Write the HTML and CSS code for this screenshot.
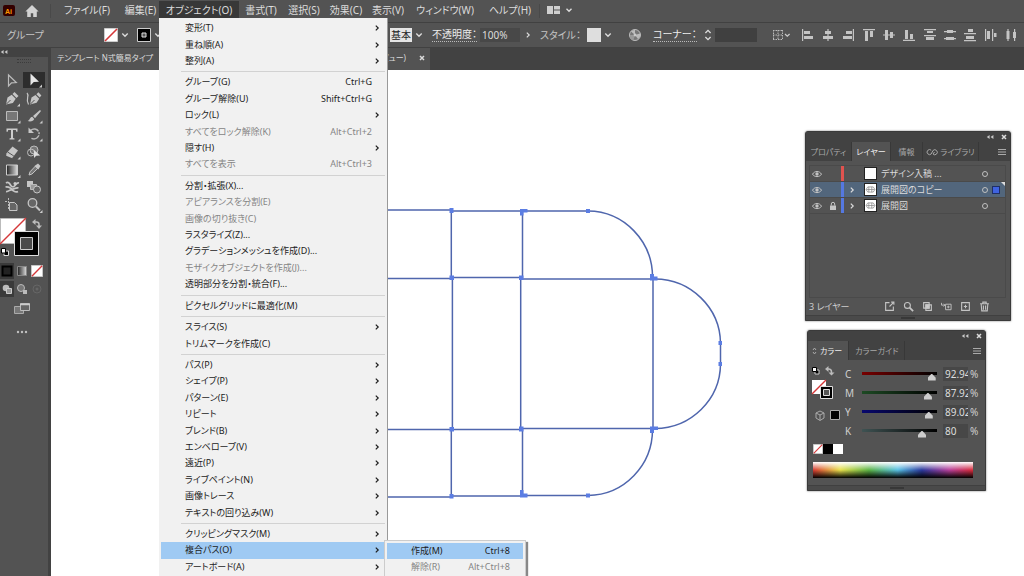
FILE: index.html
```html
<!DOCTYPE html>
<html lang="ja">
<head>
<meta charset="utf-8">
<title>テンプレート N式簡易タイプ</title>
<link rel="stylesheet" href="styles.css">
</head>
<body>
<svg class="defs" aria-hidden="true">
  <symbol id="chev-down" viewBox="0 0 8 8"><path d="M1.3 2.6 4 5.2 6.7 2.6" fill="none" stroke="currentColor" stroke-width="1.4"/></symbol>
  <symbol id="chev-right" viewBox="0 0 8 8"><path d="M2.8 1.6 5.2 4 2.8 6.4" fill="none" stroke="currentColor" stroke-width="1.2"/></symbol>
  <symbol id="none" viewBox="0 0 14 14"><path d="M.5.5h13v13H.5z" fill="#fff" stroke="#ccc"/><path d="M1 13 13 1" stroke="#d5383a" stroke-width="1.6"/></symbol>
  <symbol id="eye" viewBox="0 0 10 8"><path d="M.5 4.2C2.5.6 7.5.6 9.5 4.2 7.5 7.4 2.5 7.4.5 4.2z" fill="none" stroke="#c4c4c4"/><circle cx="5" cy="4" r="1.7" fill="#c4c4c4"/></symbol>
  <symbol id="close" viewBox="0 0 8 8"><path d="m2 2 4 4M6 2 2 6" stroke="currentColor" stroke-width="1.5"/></symbol>
  <symbol id="collapse" viewBox="0 0 8 8"><path d="M3.6 2v4L.8 4zM7.4 2v4L4.6 4z" fill="#c8c8c8"/></symbol>
  <symbol id="burger" viewBox="0 0 8 8"><path d="M0 1.5h8M0 4h8M0 6.5h8" stroke="#aaa"/></symbol>
  <symbol id="net" viewBox="0 0 12 12"><path d="M0 0h12v12H0z" fill="#fff"/><path d="M1.5 6h9M4.2 3v6M7.4 3v6M3 3.2h6L10.8 6 9 8.8H3L1.2 6z" fill="none" stroke="#888" stroke-width=".8"/></symbol>
</svg>
<div class="app">
  <header class="menubar">
    <svg class="brand" viewBox="0 0 52 22" aria-label="Ai" role="img">
      <rect x="3" y="5" width="12" height="11" rx="2" fill="#330000"/>
      <text x="5" y="13.5" class="brand-text">Ai</text>
      <path d="M32 5 25.4 11.6h1.8V17h3.6v-3.8h2.4V17h3.6v-5.4h1.8z" fill="#d2d2d2"/>
      <path d="M50.5 4v14" stroke="#494949"/>
    </svg>
    <nav class="menus">
      <button>ファイル(F)</button><button>編集(E)</button><button class="open">オブジェクト(O)</button><button>書式(T)</button><button>選択(S)</button><button>効果(C)</button><button>表示(V)</button><button>ウィンドウ(W)</button><button>ヘルプ(H)</button>
    </nav>
    <button class="arrange" aria-label="ドキュメントレイアウト"><svg viewBox="0 0 36 22"><path d="M.5 4v14" stroke="#494949"/><path d="M8 6h6v8H8zM15 6h6v3.5h-6zM15 10.500h6V14h-6z" fill="#cfcfcf"/><path d="m27.500 8.800 2.500 2.400 2.500-2.400" fill="none" stroke="#ddd" stroke-width="1.400"/></svg></button>
  </header>

  <section class="controlbar">
    <span class="selection-kind">グループ</span>
    <button class="swatch-btn" aria-label="塗り"><svg class="sw"><use href="#none"/></svg><svg class="chev"><use href="#chev-down"/></svg></button>
    <button class="swatch-btn" aria-label="線"><svg class="sw" viewBox="0 0 14 14"><path d="M.5.5h13v13H.5z" fill="#000" stroke="#ccc"/><path d="M5 5h4v4H5z" fill="#555" stroke="#ddd"/></svg><svg class="chev"><use href="#chev-down"/></svg></button>
    <label class="brush"><select aria-label="ブラシ定義"><option>基本</option></select><svg class="chev"><use href="#chev-down"/></svg></label>
    <label class="link" for="opacity">不透明度：</label>
    <span class="opacity"><input id="opacity" value="100%"><svg class="chev"><use href="#chev-right"/></svg></span>
    <span class="style-label">スタイル：</span>
    <button class="swatch-btn" aria-label="グラフィックスタイル"><svg class="sw" viewBox="0 0 14 14"><path d="M0 0h14v14H0z" fill="#dedede"/></svg><svg class="chev"><use href="#chev-down"/></svg></button>
    <button class="globe" aria-label="オブジェクトを再配色"><svg viewBox="0 0 14 14"><circle cx="7" cy="7" r="5.500" fill="#777" stroke="#bdbdbd"/><path d="M7 7 3 3.500A5 5 0 0 1 7 2zM7 7l5-1.500A5 5 0 0 1 10 11z" fill="#bbb"/><path d="m7 7-1.500 5A5 5 0 0 1 2 7z" fill="#999"/><circle cx="7" cy="7" r="1.400" fill="#c8c8c8"/></svg></button>
    <label class="link" for="corner">コーナー：</label>
    <span class="corner"><svg viewBox="0 0 10 14"><path d="M2.400 5 5 2.400 7.600 5M2.400 9 5 11.600 7.600 9" fill="none" stroke="#ddd" stroke-width="1.300"/></svg><input id="corner" value=""></span>
    <button class="grid-btn" aria-label="整列"><svg viewBox="0 0 22 14"><path d="M3 2.500h10M3 7h10M3 11.500h10M3.500 2v10M8 2v10M12.500 2v10" stroke="#bbb" stroke-dasharray="1.500 1" fill="none"/><path d="m15 6 2.300 2.200L19.600 6" fill="none" stroke="#ccc" stroke-width="1.200"/></svg></button>
    <span class="aligns">
      <span class="align-group">
        <button aria-label="水平方向左に整列"><svg viewBox="0 0 14 14"><path d="M1 1h1.200v12H1zM3 3h6v3H3zM3 8h9v3H3z"/></svg></button>
        <button aria-label="水平方向中央に整列"><svg viewBox="0 0 14 14"><path d="M6.400 1h1.200v12H6.400zM4 3h6v3H4zM2 8h10v3H2z"/></svg></button>
        <button aria-label="水平方向右に整列"><svg viewBox="0 0 14 14"><path d="M11.800 1H13v12h-1.200zM5 3h6v3H5zM2 8h9v3H2z"/></svg></button>
      </span>
      <span class="align-group">
        <button aria-label="垂直方向上に整列"><svg viewBox="0 0 14 14"><path d="M1 1h12v1.200H1zM3 3h3v10H3zM8 3h3v6H8z"/></svg></button>
        <button aria-label="垂直方向中央に整列"><svg viewBox="0 0 14 14"><path d="M1 6.400h12v1.200H1zM3 2h3v10H3zM8 4h3v6H8z"/></svg></button>
        <button aria-label="垂直方向下に整列"><svg viewBox="0 0 14 14"><path d="M1 11.800h12V13H1zM3 2h3v9H3zM8 6h3v5H8z"/></svg></button>
      </span>
      <span class="align-group">
        <button aria-label="上端分布"><svg viewBox="0 0 14 14"><path d="M1 1h12v1.200H1zM4 3h6v2H4zM1 7h12v1.200H1zM3 9h8v3H3z"/></svg></button>
        <button aria-label="垂直中央分布"><svg viewBox="0 0 14 14"><path d="M1 3h12v1.200H1zM4 2h6v3H4zM1 10h12v1.200H1zM3 9h8v3H3z"/></svg></button>
        <button aria-label="下端分布"><svg viewBox="0 0 14 14"><path d="M1 5h12v1.200H1zM5 1h5v3H5zM1 12h12v1.200H1zM3 8h8v3H3z"/></svg></button>
      </span>
      <span class="align-group">
        <button aria-label="左端分布"><svg viewBox="0 0 14 14"><path d="M1 1h1.200v12H1zM3 3h3v8H3zM8 1h1.200v12H8zM10 5h2.500v4H10z"/></svg></button>
        <button aria-label="水平中央分布"><svg viewBox="0 0 14 14"><path d="M3.400 1h1.200v12H3.400zM2.500 3h3v8h-3zM10 1h1.200v12H10zM9 4h3v6H9z"/></svg></button>
      </span>
    </span>
  </section>

  <main class="workspace">
    <aside class="toolbar">
      <div class="tool-head"><svg viewBox="0 0 8 8"><use href="#collapse"/></svg></div>
      <div class="tool-grip"></div>
      <div class="tools">
        <button aria-label="選択"><svg viewBox="0 0 18 18"><path d="M5.500 3v11l3-3.200 4.800-.3z" fill="none" stroke="#bbb" stroke-width="1.200"/></svg></button>
        <button class="on" aria-label="ダイレクト選択"><svg viewBox="0 0 18 18"><path d="M5.500 2.500v12l3.300-3.400 5.200-.3z" fill="#e6e6e6"/><path d="M17 13.500v3h-3z" fill="#ccc"/></svg></button>
        <button aria-label="ペン"><svg viewBox="0 0 18 18"><path d="m3 14.500 1.500-7 4.200-2.700 4 4-2.800 4.100zM9.500 4l2-2 4 4-2 2z" fill="#c6c6c6"/><path d="m3.500 14 4-4" stroke="#535353"/><path d="M17 13.500v3h-3z" fill="#ccc"/></svg></button>
        <button aria-label="曲線"><svg viewBox="0 0 18 18"><path d="m5 14.500 1.500-7 4-2.500 3.700 3.700-2.600 4zM11.400 4.200l2-2 3 3.200-1.800 2z" fill="#c6c6c6"/><path d="m5.500 14 4-4" stroke="#535353"/><path d="M2 3c3 3-2 6 1.500 11.500" fill="none" stroke="#c6c6c6" stroke-width="1.200"/></svg></button>
        <button aria-label="長方形"><svg viewBox="0 0 18 18"><path d="M3.500 4.500h11v9h-11z" fill="#777" stroke="#bcbcbc"/><path d="M17.500 13.500v3h-3z" fill="#ccc"/></svg></button>
        <button aria-label="ブラシ"><svg viewBox="0 0 18 18"><path d="M15 3 8 9l2 2.200L16 4zM7.300 9.800c-2.300.2-2.300 3.200-4.600 4.200 2.800 1 6 0 6.500-2z" fill="#c6c6c6"/><path d="M17.500 13.500v3h-3z" fill="#ccc"/></svg></button>
        <button aria-label="文字"><svg viewBox="0 0 18 18"><path d="M3.500 3.500h11v3.200h-1.200l-.5-1.700H10v8l1.500.4v1h-5v-1L8 13V5H5.200l-.5 1.700H3.500z" fill="#ccc"/><path d="M17.500 13.500v3h-3z" fill="#ccc"/></svg></button>
        <button aria-label="回転"><svg viewBox="0 0 18 18"><path d="M5.500 5.500C10 1.500 16 6 13.500 11c-1.700 3-5 3.500-8 2" fill="none" stroke="#b8b8b8" stroke-width="1.500" stroke-dasharray="9 1 2 1"/><path d="M3.500 2.500V8H9z" fill="#c6c6c6"/><path d="M17.500 13.500v3h-3z" fill="#ccc"/></svg></button>
        <button aria-label="消しゴム"><svg viewBox="0 0 18 18"><path d="m9.500 3.500 5.500 4-5 6.500-6.500-3.800z" fill="#c6c6c6"/><path d="m4.600 9 6.200 4" stroke="#535353"/><path d="m3.500 10-.3 2.800 6 2.500 1-2" fill="#c6c6c6"/><path d="M17.500 13.500v3h-3z" fill="#ccc"/></svg></button>
        <button aria-label="シェイプ形成"><svg viewBox="0 0 18 18"><circle cx="9" cy="7" r="4" fill="#777" stroke="#bbb"/><circle cx="6" cy="9.500" r="3.500" fill="none" stroke="#bbb"/><path d="M9 7v8l2.200-2.200 4-.3z" fill="#ddd"/></svg></button>
        <button aria-label="グラデーション"><svg viewBox="0 0 18 18"><defs><linearGradient id="g1"><stop stop-color="#222"/><stop offset="1" stop-color="#ddd"/></linearGradient></defs><path d="M3.500 4h11v10h-11z" fill="url(#g1)" stroke="#ccc"/><path d="M17.500 14v3h-3z" fill="#ccc"/></svg></button>
        <button aria-label="スポイト"><svg viewBox="0 0 18 18"><path d="m4 14 1-3.200L10.500 5l2.300 2.300L7 13z" fill="#777" stroke="#c6c6c6"/><path d="m9.500 5 3.800 3.500 2.200-3.500-2.500-2.500z" fill="#c6c6c6"/></svg></button>
        <button aria-label="パペットワープ"><svg viewBox="0 0 18 18"><path d="M3 5c2-1.500 3.500 0 4.500 2s3 2.500 4.500.5 2-3 4-2.500M2.500 9c3-.5 4.500 1 6.500 2s3.500-2 6.500-1M3 13.500c3 .5 3.500-2.500 6-1.500s3 3 6 1.500" fill="none" stroke="#c6c6c6" stroke-width="1.700"/><circle cx="12" cy="5.500" r="1.500" fill="#ccc"/></svg></button>
        <button aria-label="ブレンド"><svg viewBox="0 0 18 18"><path d="M2 3h6v6H2z" fill="#c6c6c6"/><path d="M5.500 6.500h6v5h-6z" fill="#999" stroke="#bbb"/><circle cx="12" cy="11.500" r="3.500" fill="#666" stroke="#c6c6c6"/></svg></button>
        <button aria-label="アートボード"><svg viewBox="0 0 18 18"><path d="M5.500 2v12M2 5.500h3.500" stroke="#bbb" stroke-dasharray="2 1"/><path d="M6.500 6.500h5l2.500 2.500v5.500H6.500z" fill="#666" stroke="#c6c6c6"/></svg></button>
        <button aria-label="ズーム"><svg viewBox="0 0 18 18"><circle cx="7.500" cy="7" r="4.300" fill="#666" stroke="#c6c6c6" stroke-width="1.300"/><path d="m11 10.500 4 4" stroke="#c6c6c6" stroke-width="2"/><path d="M17.500 14v3h-3z" fill="#ccc"/></svg></button>
      </div>
      <svg class="fill-stroke" viewBox="0 0 48 44" aria-label="塗りと線" role="img">
        <path d="M.5 1.500h25v25H.5z" fill="#fff" stroke="#bbb"/><path d="m0 27 26-26" stroke="#d5383a" stroke-width="1.500"/>
        <path d="M14.500 14.500h24v24h-24z" fill="#000" stroke="#ddd"/><path d="M20.500 20.500h12v12h-12z" fill="#4a4a4a" stroke="#ccc"/>
        <path d="M34 5h2.500a2.500 2.500 0 0 1 2.500 2.500V9" fill="none" stroke="#bbb" stroke-width="1.500"/><path d="M35.500 2v6L32 5zM36 8.500h6l-3 3.500z" fill="#bbb"/>
        <path d="M4 34h4.500v4.500H4z" fill="#000" stroke="#ddd"/><path d="M1.500 31.500h4V36h-4z" fill="#fff" stroke="#000"/>
      </svg>
      <div class="modes">
        <button class="on" aria-label="カラー"><svg viewBox="0 0 12 12"><path d="M1.500 1.500h9v9h-9z" fill="#222" stroke="#000" stroke-width="2"/></svg></button>
        <button aria-label="グラデーション塗り"><svg viewBox="0 0 12 12"><path d="M1.500 1.500h9v9h-9z" fill="url(#g1)" stroke="#888"/></svg></button>
        <button aria-label="なし"><svg viewBox="0 0 12 12"><use href="#none"/></svg></button>
        <button class="on" aria-label="標準描画"><svg viewBox="0 0 12 12"><circle cx="5" cy="5" r="3.300" fill="#bbb"/><path d="M5.500 5.500h5v5h-5z" fill="#999" stroke="#ccc"/></svg></button>
        <button aria-label="背面描画"><svg viewBox="0 0 12 12"><circle cx="5" cy="5" r="3.500" fill="#777" stroke="#bbb"/><path d="M7 7h4v4H7z" fill="#bbb"/></svg></button>
        <button aria-label="内側描画"><svg viewBox="0 0 12 12"><circle cx="6" cy="6" r="4" fill="none" stroke="#666"/><circle cx="6" cy="6" r="1.500" fill="#666"/></svg></button>
      </div>
      <button class="screen-mode" aria-label="スクリーンモード"><svg viewBox="0 0 18 14"><path d="M1.500 4.500h9v7h-9z" fill="#777" stroke="#aaa"/><path d="M7.500 1.500h9v7h-9z" fill="#666" stroke="#bbb"/><path d="M7 2.500h10" stroke="#ccc" stroke-width="1.500"/></svg></button>
      <button class="more" aria-label="ツールバーを編集"><svg viewBox="0 0 12 4"><circle cx="2" cy="2" r="1.200"/><circle cx="6" cy="2" r="1.200"/><circle cx="10" cy="2" r="1.200"/></svg></button>
    </aside>

    <section class="document">
      <div class="tabs"><div class="doc-tab"><span>テンプレート N式簡易タイプ</span><span class="tab-end">ビュー)</span><button aria-label="閉じる"><svg><use href="#close"/></svg></button></div></div>
      <div class="canvas">
        <svg class="artwork" viewBox="380 200 350 305">
          <g fill="none" stroke="#4f66ad" stroke-width="1.500">
            <path d="M380 210h71M451 211H588A65 66 0 0 1 652.500 278M380 278.500h71M451 277.500h71M522 279H655A66 65 0 0 1 720.500 343V364A66 65 0 0 1 655 428.500H522M380 429.500H521M380 497h71M451 496h71M522 495.500H588A65 66 0 0 0 652.500 429"/>
            <path d="M451.300 210v68M522.500 211v67M452.400 278v151M520.700 278v151M653 278v151M451.300 429v68M522.500 429v67"/>
          </g>
          <path fill="#5b7de3" d="M449.500 208h4v5h-4zM520 209h3.500v6.500H520zM523.500 209h4v3.500h-4zM586 209h4v4h-4zM449.500 275.500h4.500v4.500h-4.500zM519 275.500h4.500v4.500H519zM650 274h4v2.500h3.500v4H650zM718.500 341h3.500v4h-3.500zM718.500 362h3.500v4h-3.500zM449.500 427h4.500v4.500h-4.500zM519 426.500h4.500v5H519zM650 426.500h8v3.500h-4v3h-4zM449.500 494h4v4.500h-4zM520 490h3.500v3.500h4v4H520zM586 493.500h4v4h-4z"/>
        </svg>
      </div>
    </section>
  </main>

  <ul class="menu">
    <li><button>変形(T)<svg><use href="#chev-right"/></svg></button></li>
    <li><button>重ね順(A)<svg><use href="#chev-right"/></svg></button></li>
    <li><button>整列(A)<svg><use href="#chev-right"/></svg></button></li>
    <li class="sep"></li>
    <li><button>グループ(G)<kbd>Ctrl+G</kbd></button></li>
    <li><button>グループ解除(U)<kbd>Shift+Ctrl+G</kbd></button></li>
    <li><button>ロック(L)<svg><use href="#chev-right"/></svg></button></li>
    <li><button disabled>すべてをロック解除(K)<kbd>Alt+Ctrl+2</kbd></button></li>
    <li><button>隠す(H)<svg><use href="#chev-right"/></svg></button></li>
    <li><button disabled>すべてを表示<kbd>Alt+Ctrl+3</kbd></button></li>
    <li class="sep"></li>
    <li><button>分割・拡張(X)...</button></li>
    <li><button disabled>アピアランスを分割(E)</button></li>
    <li><button disabled>画像の切り抜き(C)</button></li>
    <li><button>ラスタライズ(Z)...</button></li>
    <li><button>グラデーションメッシュを作成(D)...</button></li>
    <li><button disabled>モザイクオブジェクトを作成(J)...</button></li>
    <li><button>透明部分を分割・統合(F)...</button></li>
    <li class="sep"></li>
    <li><button>ピクセルグリッドに最適化(M)</button></li>
    <li class="sep"></li>
    <li><button>スライス(S)<svg><use href="#chev-right"/></svg></button></li>
    <li><button>トリムマークを作成(C)</button></li>
    <li class="sep"></li>
    <li><button>パス(P)<svg><use href="#chev-right"/></svg></button></li>
    <li><button>シェイプ(P)<svg><use href="#chev-right"/></svg></button></li>
    <li><button>パターン(E)<svg><use href="#chev-right"/></svg></button></li>
    <li><button>リピート<svg><use href="#chev-right"/></svg></button></li>
    <li><button>ブレンド(B)<svg><use href="#chev-right"/></svg></button></li>
    <li><button>エンベロープ(V)<svg><use href="#chev-right"/></svg></button></li>
    <li><button>遠近(P)<svg><use href="#chev-right"/></svg></button></li>
    <li><button>ライブペイント(N)<svg><use href="#chev-right"/></svg></button></li>
    <li><button>画像トレース<svg><use href="#chev-right"/></svg></button></li>
    <li><button>テキストの回り込み(W)<svg><use href="#chev-right"/></svg></button></li>
    <li class="sep"></li>
    <li><button>クリッピングマスク(M)<svg><use href="#chev-right"/></svg></button></li>
    <li><button class="hot">複合パス(O)<svg><use href="#chev-right"/></svg></button>
      <ul class="submenu">
        <li><button class="hot">作成(M)<kbd>Ctrl+8</kbd></button></li>
        <li><button disabled>解除(R)<kbd>Alt+Ctrl+8</kbd></button></li>
      </ul>
    </li>
    <li><button>アートボード(A)<svg><use href="#chev-right"/></svg></button></li>
  </ul>

  <section class="panel layers">
    <div class="panel-top"><svg><use href="#collapse"/></svg><svg><use href="#close"/></svg></div>
    <div class="panel-tabs">
      <button>プロパティ</button><button class="current">レイヤー</button><button>情報</button><button class="cc"><svg viewBox="0 0 12 8"><path d="M5.200 2.200A2.500 2.500 0 1 0 5.200 6L7 2.500A2.500 2.500 0 1 1 7 6M8.500 4 7 6" fill="none" stroke="currentColor"/></svg>ライブラリ</button>
      <svg class="burger"><use href="#burger"/></svg>
    </div>
    <div class="layer-list">
      <div class="layer"><svg class="eye"><use href="#eye"/></svg><i></i><b class="red"></b><i></i><span class="thumb"></span><span class="name">デザイン入稿 ...</span><span class="target"></span></div>
      <div class="layer picked"><svg class="eye"><use href="#eye"/></svg><i></i><b></b><svg class="tw"><use href="#chev-right"/></svg><svg class="thumb"><use href="#net"/></svg><span class="name">展開図のコピー</span><span class="target"></span><span class="chosen"></span></div>
      <div class="layer"><svg class="eye"><use href="#eye"/></svg><svg class="lock" viewBox="0 0 8 10"><path d="M1 4.500h6V9H1z" fill="#c4c4c4"/><path d="M2.300 4.500V3a1.700 1.700 0 0 1 3.400 0v1.500" fill="none" stroke="#c4c4c4"/></svg><b></b><svg class="tw"><use href="#chev-right"/></svg><svg class="thumb"><use href="#net"/></svg><span class="name">展開図</span><span class="target"></span></div>
    </div>
    <div class="panel-foot">
      <span>3 レイヤー</span>
      <button aria-label="書き出し"><svg viewBox="0 0 10 10"><path d="M5 1.500H1.500v7h7V5M5 5l4-4M6.500 1H9v2.500"/></svg></button>
      <button aria-label="検索"><svg viewBox="0 0 10 10"><circle cx="4" cy="4" r="2.700"/><path d="m6 6 3.200 3.200" stroke-width="1.600"/></svg></button>
      <button aria-label="クリッピングマスク"><svg viewBox="0 0 10 10"><path d="M1.500 1.500h5v5h-5zM3.500 3.500h5v5h-5z"/><path d="M3.500 3.500h3v3h-3z" fill="#ccc"/></svg></button>
      <button aria-label="サブレイヤー"><svg viewBox="0 0 12 10"><path d="M5 2.500h6v6H5zM8 4v3M6.500 5.500h3M.5 1v2.500H4M2.800 2 4.200 3.500 2.800 5"/></svg></button>
      <button aria-label="新規レイヤー"><svg viewBox="0 0 10 10"><path d="M1.500 1.500h7v7h-7zM5 3.500v3M3.500 5h3"/></svg></button>
      <button aria-label="削除"><svg viewBox="0 0 10 10"><path d="M1 2.500h8M3.500 2V1h3v1M2 3l.5 6h5L8 3M4 4v4M6 4v4"/></svg></button>
    </div>
    <div class="panel-grip"></div>
  </section>

  <section class="panel color">
    <div class="panel-top"><svg><use href="#collapse"/></svg><svg><use href="#close"/></svg></div>
    <div class="panel-tabs">
      <button class="current"><svg viewBox="0 0 5 8"><path d="m1 3 1.500-2L4 3M1 5l1.500 2L4 5" fill="none" stroke="#aaa"/></svg>カラー</button><button>カラーガイド</button>
      <svg class="burger"><use href="#burger"/></svg>
    </div>
    <div class="color-body">
      <svg class="color-proxy" viewBox="0 0 36 66" aria-label="塗りと線" role="img">
        <path d="M7 6h4v4H7z" fill="#000" stroke="#ccc"/><path d="M4.500 3.500h4v4h-4z" fill="#fff" stroke="#000"/>
        <path d="M19 5h1.500a3 3 0 0 1 3 3v1" fill="none" stroke="#bbb" stroke-width="1.500"/><path d="M20.500 2v6L17 5zM20.500 8.500h6l-3 3z" fill="#bbb"/>
        <path d="M4 16h14v14H4z" fill="#fff"/><path d="m4 30 14-14" stroke="#d5383a" stroke-width="1.400"/>
        <path d="M12.500 22.500h12v12h-12z" fill="#000" stroke="#ddd"/><path d="M15.500 25.500h6v6h-6z" fill="#555" stroke="#ddd"/>
        <path d="m12 47 4 2v5l-4 2.500L8 54v-5zM8 49l4 2 4-2M12 51v5" fill="none" stroke="#aaa"/>
        <path d="M22.500 46.500h9v9h-9z" fill="#000" stroke="#aaa"/>
      </svg>
      <div class="channels">
        <label for="c">C</label><input class="c" type="range" min="0" max="100" step="any" value="92.94" aria-label="C"><input id="c" value="92.94"><span>%</span>
        <label for="m">M</label><input class="m" type="range" min="0" max="100" step="any" value="87.92" aria-label="M"><input id="m" value="87.92"><span>%</span>
        <label for="y">Y</label><input class="y" type="range" min="0" max="100" step="any" value="89.02" aria-label="Y"><input id="y" value="89.02"><span>%</span>
        <label for="k">K</label><input class="k" type="range" min="0" max="100" step="any" value="80" aria-label="K"><input id="k" value="80"><span>%</span>
      </div>
    </div>
    <div class="quick"><svg viewBox="0 0 14 14"><use href="#none"/></svg><span class="black"></span><span class="white"></span></div>
    <div class="spectrum"></div>
    <div class="panel-grip"></div>
  </section>
</div>
</body>
</html>
```
FILE: styles.css
```css
* { box-sizing: border-box; }
body {
  margin: 0;
  font: 10px/14px "Noto Sans", "Noto Sans CJK JP", sans-serif;
  font-feature-settings: "palt";
  color: #dcdcdc;
}
button, input, select {
  margin: 0;
  padding: 0;
  border: 0;
  border-radius: 0;
  background: none;
  color: inherit;
  font: inherit;
  font-feature-settings: inherit;
  appearance: none;
}
button { display: flex; align-items: center; justify-content: center; white-space: nowrap; }
svg { display: block; flex: none; }
ul { list-style: none; margin: 0; padding: 0; }
.defs { position: absolute; width: 0; height: 0; }
.app {
  position: relative;
  display: flex;
  flex-direction: column;
  height: 100vh;
  overflow: hidden;
  background: #535353;
}

/* Menu bar */
.menubar { display: flex; flex: none; height: 22px; }
.brand { width: 52px; height: 22px; }
.brand-text { font: bold 7px "Liberation Sans", sans-serif; fill: #ff9a00; }
.menus {
  display: grid;
  grid-template-columns: 70px 37px 80px 44px 42px 42px 42px 72px 58px;
  height: 18px;
  padding-top: 1px;
}
.menus .open { background: #383838; }
.arrange { width: 36px; height: 22px; }
.arrange svg { width: 36px; height: 22px; }

/* Control bar */
.controlbar {
  display: grid;
  grid-template-columns: 104px 33px 253px 42px 48px 60px 47px 41px 25px 50px 64px 31px 1fr;
  align-items: center;
  flex: none;
  height: 26px;
  border-top: 1px solid #414141;
  border-bottom: 1px solid #414141;
  white-space: nowrap;
}
.selection-kind { padding-left: 7px; color: #c4c4c4; }
.swatch-btn { justify-content: flex-start; gap: 3px; }
.sw { width: 14px; height: 14px; }
.chev { width: 8px; height: 8px; }
.brush { display: flex; align-items: center; gap: 3px; }
.brush select { width: 22px; height: 14px; padding-left: 1px; background: #e4e4e4; color: #222; }
.link { justify-self: start; border-bottom: 1px dotted #bbb; line-height: 13px; color: #eee; }
.opacity, .corner { display: flex; align-items: center; gap: 4px; }
.opacity input { width: 40px; height: 14px; padding-left: 2px; background: #484848; }
.style-label { color: #c4c4c4; }
.globe { width: 14px; height: 14px; }
.globe svg { width: 14px; height: 14px; }
.corner { gap: 2px; }
.corner svg { width: 10px; height: 14px; }
.corner input { width: 42px; height: 14px; background: #404040; }
.grid-btn { width: 28px; }
.grid-btn svg { width: 22px; height: 14px; }
.aligns { display: flex; gap: 1px; overflow: hidden; }
.align-group { display: flex; }
.align-group button { width: 20px; height: 16px; }
.align-group svg { width: 14px; height: 14px; fill: #c4c4c4; }

/* Work area */
.workspace { display: flex; flex: 1; min-height: 0; }
.toolbar {
  flex: none;
  width: 51px;
  border-right: 3px solid #424242;
}
.tool-head { height: 9px; background: #424242; }
.tool-head svg { width: 8px; height: 8px; }
.tool-grip { width: 14px; height: 4px; margin: 2px auto; border: dotted #3c3c3c; border-width: 1px 0; }
.tools { display: grid; grid-template: repeat(8, 1fr) / 23px 22px; height: 143px; padding-top: 1px; margin-top: 8px; }
.tools button { min-height: 0; }
.tools .on { height: 16px; background: #2d2d2d; }
.tools svg { width: 18px; height: 18px; }
.fill-stroke { width: 48px; height: 44px; margin-top: 3px; }
.modes { display: grid; grid-template: 18px 18px / repeat(3, 15px); margin-top: 2px; }
.modes button { width: 14px; height: 16px; }
.modes .on { background: #3a3a3a; }
.modes svg { width: 12px; height: 12px; }
.screen-mode { width: 18px; margin: 3px auto 0 13px; }
.screen-mode svg { width: 18px; height: 14px; }
.more { width: 12px; margin: 14px auto 0 16px; }
.more svg { width: 12px; height: 4px; fill: #c0c0c0; }
.document { display: flex; flex-direction: column; flex: 1; min-width: 0; }
.tabs { flex: none; height: 22px; background: #424242; }
.doc-tab { display: flex; align-items: center; width: 379px; height: 22px; padding: 0 4px 2px 6px; background: #535353; font-size: 8px; }
.tab-end { margin-left: auto; }
.doc-tab button { width: 8px; margin-left: 12px; }
.doc-tab svg { width: 8px; height: 8px; }
.canvas { position: relative; flex: 1; background: #fff; }
.artwork { position: absolute; left: 329px; top: 130px; width: 350px; height: 305px; }

/* Drop-down menu */
.menu {
  position: absolute;
  left: 159px;
  top: 18px;
  bottom: 0;
  display: flex;
  flex-direction: column;
  width: 229px;
  padding: 2px 2px 1px;
  border-right: 1px solid #999;
  background: #f1f1f1;
  color: #1c1c1c;
  font-size: 9px;
}
.menu li { position: relative; display: flex; flex: 1; min-height: 0; }
.menu button { flex: 1; justify-content: flex-start; padding: 0 4px 0 24px; line-height: 12px; }
.menu button:disabled { color: #858585; }
.menu .hot { background: #9fcaf3; }
.menu button svg { width: 8px; height: 8px; margin-left: auto; }
.menu kbd { margin: 0 9px 0 auto; font: inherit; }
.menu .sep { flex: none; height: 5px; margin: 0 0 0 20px; align-items: center; }
.menu .sep::before { content: ""; flex: 1; height: 1px; background: #d2d2d2; }
.menu .submenu {
  position: absolute;
  left: 223px;
  top: -2px;
  display: grid;
  grid-auto-rows: 16px;
  width: 142px;
  padding: 2px;
  background: #f1f1f1;
  border: 1px solid #ccc;
  box-shadow: 2px 2px 1px #888;
}

/* Floating panels */
.panel {
  position: absolute;
  display: flex;
  flex-direction: column;
  border: 1px solid #3a3a3a;
  border-radius: 3px 3px 0 0;
  background: #535353;
  box-shadow: 0 0 2px #666;
}
.layers { left: 805px; top: 131px; width: 206px; height: 190px; }
.color { left: 807px; top: 330px; width: 179px; height: 161px; }
.panel-top { display: flex; flex: none; justify-content: flex-end; gap: 6px; height: 10px; padding: 1px 2px 0; background: #424242; }
.panel-top svg { width: 8px; height: 8px; }
.panel-tabs { display: flex; flex: none; height: 19px; background: #424242; color: #a8a8a8; font-size: 8px; }
.panel-tabs button { padding: 0 6px; border-right: 1px solid #383838; }
.panel-tabs .current { background: #535353; color: #eee; }
.panel-tabs .burger { width: 8px; height: 8px; margin: 6px 4px 0 auto; }
.layers .panel-tabs { display: grid; grid-template-columns: 46px 39px 32px 56px 1fr; }
.layers .panel-tabs button { padding: 0; }
.cc { gap: 2px; }
.cc svg { width: 12px; height: 8px; }
.layer-list { flex: 1; margin: 4px 4px 0 3px; border: 1px solid #4a4a4a; }
.layer {
  position: relative;
  display: grid;
  grid-template-columns: 16px 15px 3px 17px 16px 1fr 8px 17px;
  align-items: center;
  height: 16px;
  border-bottom: 1px solid #4a4a4a;
  font-size: 9px;
}
.layer.picked { background: #52667c; }
.layer.picked::after {
  content: "";
  position: absolute;
  top: 0;
  right: 0;
  border: 2px solid;
  border-color: #ddd #ddd transparent transparent;
}
.eye { width: 10px; height: 8px; margin-left: 2px; }
.lock { width: 8px; height: 10px; margin-left: 3px; }
.layer b { height: 15px; background: #5578e0; }
.layer .red { background: #e0534f; }
.tw { width: 8px; height: 8px; margin-left: 4px; }
.thumb { width: 13px; height: 13px; border: 1px solid #222; background: #fff; margin-left: 3px; }
.name { padding-left: 4px; white-space: nowrap; }
.target { width: 6px; height: 6px; border: 1px solid #c0c0c0; border-radius: 50%; margin-left: 2px; }
.chosen { width: 6px; height: 6px; margin-left: 5px; background: #3f63e0; outline: 1px solid #1f2f66; }
.panel-foot { display: flex; align-items: center; flex: none; height: 17px; padding: 0 16px 0 3px; font-size: 9px; }
.panel-foot span { margin-right: auto; color: #ccc; }
.panel-foot button { width: 19px; }
.panel-foot svg { width: 11px; height: 11px; fill: none; stroke: #c4c4c4; }
.panel-grip { display: flex; justify-content: center; align-items: center; flex: none; height: 5px; border-top: 1px solid #404040; background: #4a4a4a; }
.panel-grip::before { content: ""; width: 14px; height: 2px; background: #383838; }

/* Color panel */
.color .panel-tabs button { padding: 0 6px 0 4px; gap: 3px; }
.color .panel-tabs button + button { padding-left: 6px; }
.color .current svg { width: 5px; height: 8px; }
.color-body { display: flex; flex: none; height: 80px; padding: 4px 5px 0 0; }
.color-proxy { width: 36px; height: 66px; }
.channels { display: grid; grid-template: repeat(4, 19px) / 13px 83px 28px 10px; align-items: center; color: #cfcfcf; margin-left: 1px; }
.channels input:not([type]) { width: 25px; height: 14px; margin-left: 2px; padding-left: 2px; background: #474747; color: #ddd; }
.channels span { padding-left: 1px; }
.channels input[type="range"] { width: 83px; height: 14px; background: linear-gradient(90deg, var(--from), #000) 4px 5px / 75px 3px no-repeat; }
.channels input::-webkit-slider-thumb {
  appearance: none;
  width: 8px;
  height: 7px;
  margin-top: 7px;
  background: #cdcdcd;
  clip-path: polygon(50% 0, 100% 60%, 100% 100%, 0 100%, 0 60%);
}
.c { --from: #780000; }
.m { --from: #1d4a24; }
.y { --from: #08086e; }
.k { --from: #3f5353; }
.quick { display: flex; flex: none; height: 10px; margin: 4px 0 8px 5px; }
.quick svg, .quick span { width: 10px; height: 10px; }
.black { background: #000; }
.white { background: #fff; }
.spectrum {
  flex: none;
  height: 16px;
  margin: 0 12px auto 5px;
  background:
    linear-gradient(#fff, #fff0 50%, #0000 50%, #000),
    linear-gradient(90deg, #d93a32, #e8e04c 17%, #5cb446 35%, #58c0e4 53%, #2b3a9e 68%, #b8419c 85%, #d82c3a);
}
```
